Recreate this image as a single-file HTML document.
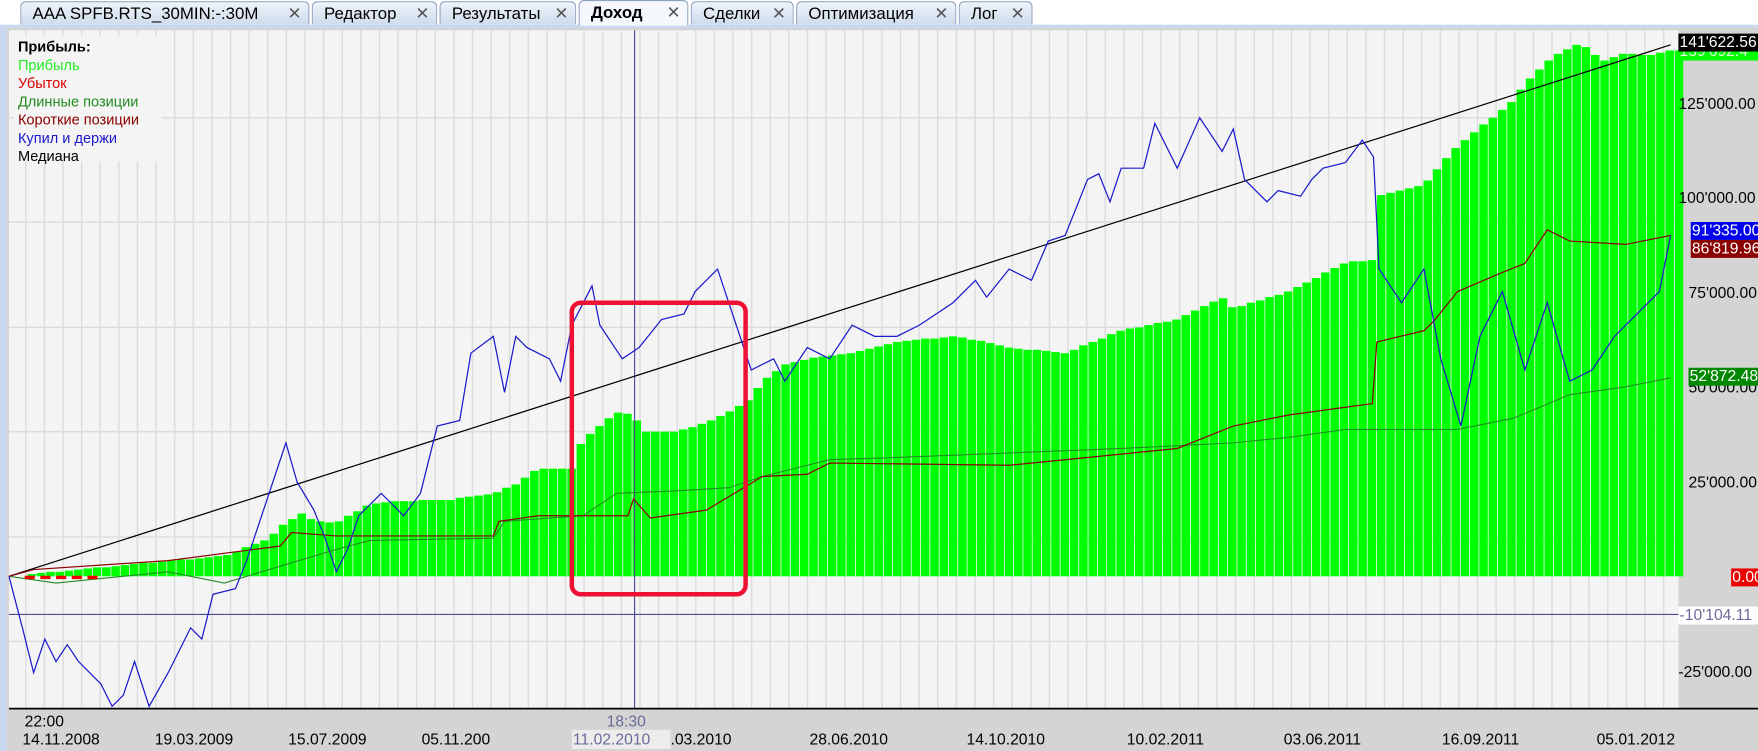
<!DOCTYPE html>
<html><head><meta charset="utf-8"><style>
body{margin:0;width:1758px;height:751px;overflow:hidden;background:#fff;font-family:"Liberation Sans","DejaVu Sans",sans-serif;}
#w{position:absolute;left:0;top:0;width:1568px;height:670px;transform:scale(1.1212);transform-origin:0 0;overflow:hidden;background:#fff}
.tab{position:absolute;top:1px;height:21px;border:1px solid #8da2bf;border-bottom:none;border-radius:5px 5px 0 0;background:linear-gradient(#eef3fa,#cfdcec);font-size:15px;line-height:21px;padding-left:10px;color:#000;box-sizing:border-box}
.tab.act{background:#f4f8fd;font-weight:bold;height:23px;top:0}
.tab .x{position:absolute;right:6px;top:0;color:#555;font-weight:bold;font-size:15px}
</style></head><body>
<div id="w">
<div style="position:absolute;left:0;top:22px;width:1568px;height:648px;background:#c9daf0"></div>
<div class="tab" style="left:18px;width:258px">AAA SPFB.RTS_30MIN:-:30M<span class="x">✕</span></div>
<div class="tab" style="left:278px;width:112px">Редактор<span class="x">✕</span></div>
<div class="tab" style="left:392px;width:122px">Результаты<span class="x">✕</span></div>
<div class="tab act" style="left:516px;width:98px">Доход<span class="x">✕</span></div>
<div class="tab" style="left:616px;width:92px">Сделки<span class="x">✕</span></div>
<div class="tab" style="left:710px;width:143px">Оптимизация<span class="x">✕</span></div>
<div class="tab" style="left:855px;width:66px">Лог<span class="x">✕</span></div>
<svg id="s" width="1568" height="670" style="position:absolute;left:0;top:0" font-family="Liberation Sans, DejaVu Sans, sans-serif" font-size="13"></svg>
</div>
<script>
var s=document.getElementById('s'),h='';
var R=1568;
h+='<rect x="6" y="25" width="1562" height="645" fill="#d4d4d4"/>';
h+='<rect x="8" y="27" width="1489" height="605" fill="#f4f4f4"/>';
for(var x=23;x<1497;x+=16.6)h+='<line x1="'+x+'" y1="27" x2="'+x+'" y2="632" stroke="#dcdcdc" stroke-width="1.3"/>';
[105,198,292,385,479,572].forEach(function(y){h+='<line x1="8" y1="'+y+'" x2="1497" y2="'+y+'" stroke="#dcdcdc" stroke-width="1.3"/>';});
function interp(p,x){for(var i=0;i<p.length-1;i++){if(x<=p[i+1][0]){var a=p[i],b=p[i+1];return a[1]+(b[1]-a[1])*(x-a[0])/(b[0]-a[0]);}}return p[p.length-1][1];}
var eq=[[8,514],[30,512],[100,505],[200,496],[240,480],[250,470],[270,458],[280,465],[300,466],[330,450],[350,447],[400,446],[440,440],[460,432],[480,418],[510,418],[520,392],[550,368],[565,370],[575,385],[600,385],[620,380],[640,373],[660,362],[670,355],[680,340],[700,325],[720,320],[760,315],[800,305],[850,300],[880,305],[900,310],[950,315],[1000,295],[1050,285],[1090,265],[1100,275],[1150,260],[1200,234],[1224,232],[1228,175],[1270,165],[1300,130],[1350,90],[1360,75],[1380,55],[1395,45],[1410,38],[1430,55],[1450,47],[1470,50],[1490,45]];
for(var x=8;x<1497;x+=8.3){var y=Math.round(interp(eq,x+4));if(y<513)h+='<rect x="'+x.toFixed(1)+'" y="'+y+'" width="7.6" height="'+(514-y)+'" fill="#00ff00"/>';}
function pl(p,c,w){return '<polyline fill="none" stroke="'+c+'" stroke-width="'+w+'" points="'+p.map(function(q){return q.join(',')}).join(' ')+'"/>';}
h+='<line x1="8" y1="548" x2="1497" y2="548" stroke="#4a4a9a" stroke-width="1"/>';
h+='<line x1="566" y1="27" x2="566" y2="632" stroke="#4a4a9a" stroke-width="1"/>';
h+='<line x1="8" y1="514" x2="1490" y2="40" stroke="#000" stroke-width="1.1"/>';
h+=pl([[8,514],[50,520],[150,510],[200,520],[250,505],[300,490],[330,482],[440,480],[450,465],[520,460],[550,440],[600,438],[650,435],[680,425],[740,410],[800,408],[1000,400],[1100,395],[1150,390],[1200,383],[1300,383],[1350,373],[1400,352],[1450,345],[1490,337]],'#228b22',1);
h+=pl([[8,514],[30,508],[150,500],[250,487],[260,475],[300,478],[440,478],[445,465],[480,460],[560,460],[565,445],[580,462],[630,455],[680,425],[720,423],[740,413],[900,415],[1000,405],[1050,400],[1100,380],[1150,370],[1224,360],[1228,305],[1270,295],[1280,285],[1300,260],[1340,243],[1360,235],[1380,205],[1400,215],[1450,218],[1490,210]],'#8b0000',1.1);
h+=pl([[8,514],[20,560],[30,600],[40,570],[50,590],[60,575],[70,590],[90,610],[100,630],[110,620],[120,590],[133,630],[150,600],[170,560],[180,570],[190,530],[210,525],[220,500],[240,440],[255,395],[265,430],[280,455],[290,480],[300,510],[310,490],[320,460],[340,440],[360,460],[375,440],[390,380],[410,375],[420,315],[440,300],[450,350],[460,300],[470,310],[490,320],[500,340],[510,290],[528,255],[535,290],[555,320],[570,310],[590,285],[610,280],[620,260],[630,250],[640,240],[655,285],[670,330],[690,320],[700,340],[720,310],[740,320],[760,290],[780,300],[800,300],[820,290],[850,270],[870,250],[880,265],[900,240],[920,250],[935,215],[950,210],[970,160],[980,155],[990,180],[1000,150],[1020,150],[1030,110],[1050,150],[1070,105],[1090,135],[1100,115],[1110,160],[1130,180],[1140,170],[1160,175],[1170,160],[1180,150],[1200,145],[1215,125],[1225,140],[1230,240],[1250,270],[1270,240],[1285,320],[1303,380],[1320,300],[1330,280],[1340,260],[1360,330],[1380,270],[1400,340],[1420,330],[1440,300],[1460,280],[1480,260],[1490,210]],'#1a1acc',1.1);
h+='<line x1="22" y1="515" x2="88" y2="515" stroke="#e00" stroke-width="3" stroke-dasharray="9,5"/>';
h+='<rect x="510" y="270" width="155" height="260" rx="8" fill="none" stroke="#ee1133" stroke-width="4"/>';
h+='<line x1="8" y1="632" x2="1568" y2="632" stroke="#000" stroke-width="1.5"/>';
var L=[['Прибыль:','#000',1],['Прибыль','#22ee22'],['Убыток','#dd0000'],['Длинные позиции','#228b22'],['Короткие позиции','#8b0000'],['Купил и держи','#1a1acc'],['Медиана','#000']];
h+='<rect x="12" y="32" width="132" height="112" fill="#f4f4f4"/>';
L.forEach(function(l,i){h+='<text x="16" y="'+(46+i*16.3)+'" fill="'+l[1]+'"'+(l[2]?' font-weight="bold"':'')+'>'+l[0]+'</text>';});
function lab(x,y,t,bg,fg){h+='<rect x="'+x+'" y="'+(y-12)+'" width="'+(R-x)+'" height="16" fill="'+bg+'"/><text x="'+(x+1)+'" y="'+y+'" fill="'+fg+'" font-size="14">'+t+'</text>';}
lab(1497,50,'139\'692.4','#00ff00','#dfffdf');
lab(1497,42,'141\'622.56','#000','#fff');
[[97,"125'000.00"],[181,"100'000.00"],[266,"75'000.00"],[350,"50'000.00"],[435,"25'000.00"],[604,"-25'000.00"]].forEach(function(a){h+='<text x="'+(a[1].length>9?1497:1506)+'" y="'+a[0]+'" font-size="14">'+a[1]+'</text>';});
lab(1508,210,'91\'335.00','#0000ee','#fff');
lab(1508,226,'86\'819.96','#8b0000','#fff');
lab(1506,340,'52\'872.48','#008800','#fff');
lab(1544,519,'0.00','#ee0000','#fff');
lab(1497,553,'-10\'104.11','#fff','#6a6a9a');
h+='<text x="22" y="648" font-size="14">22:00</text><text x="541" y="648" font-size="14" fill="#6a6a9a">18:30</text>';
[[20,'14.11.2008'],[138,'19.03.2009'],[257,'15.07.2009'],[376,'05.11.200']].forEach(function(a){h+='<text x="'+a[0]+'" y="664" font-size="14">'+a[1]+'</text>';});
h+='<rect x="510" y="651" width="88" height="17" fill="#ececec"/><text x="511" y="664" font-size="14" fill="#6a6a9a">11.02.2010</text>';
[[598,'.03.2010'],[722,'28.06.2010'],[862,'14.10.2010'],[1005,'10.02.2011'],[1145,'03.06.2011'],[1286,'16.09.2011'],[1424,'05.01.2012']].forEach(function(a){h+='<text x="'+a[0]+'" y="664" font-size="14">'+a[1]+'</text>';});
s.innerHTML=h;
</script>
</body></html>
